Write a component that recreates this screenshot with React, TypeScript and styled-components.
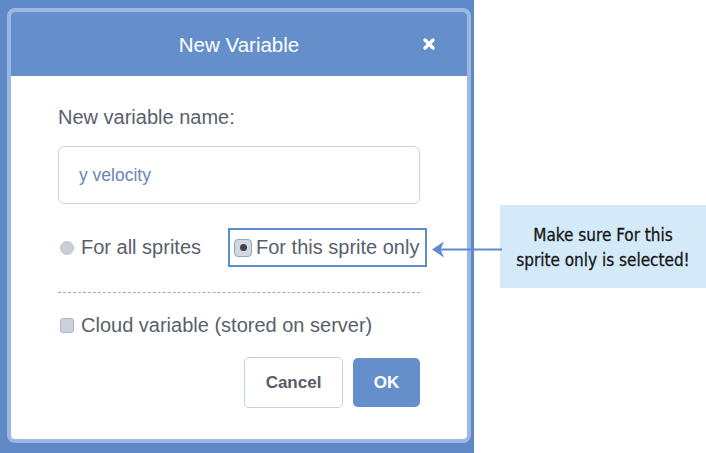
import React from 'react';
import styled, { createGlobalStyle } from 'styled-components';

const GlobalStyle = createGlobalStyle`
  html, body {
    margin: 0;
    padding: 0;
    background: #ffffff;
  }
  body {
    font-family: "Liberation Sans", Arial, sans-serif;
  }
`;

const Page = styled.div`
  position: relative;
  display: flex;
  width: 706px;
  height: 453px;
  overflow: hidden;
`;

const Backdrop = styled.div`
  box-sizing: border-box;
  flex-shrink: 0;
  width: 474px;
  height: 100%;
  padding: 8px 3px 10px 7px;
  background: #5f89c6;
`;

const Dialog = styled.div`
  box-sizing: border-box;
  display: flex;
  flex-direction: column;
  width: 100%;
  height: 100%;
  border: 4px solid #9bb8e2;
  border-radius: 8px;
  overflow: hidden;
  background: #ffffff;
`;

const Header = styled.div`
  position: relative;
  display: flex;
  align-items: center;
  justify-content: center;
  height: 64px;
  flex-shrink: 0;
  background: #658fcb;
`;

const Title = styled.h1`
  margin: 0;
  font-size: 20.5px;
  font-weight: normal;
  color: #ffffff;
  line-height: 23px;
`;

const CloseButton = styled.button`
  position: absolute;
  right: 28px;
  top: 50%;
  transform: translateY(-50%);
  display: flex;
  align-items: center;
  justify-content: center;
  width: 20px;
  height: 20px;
  padding: 0;
  border: none;
  background: transparent;
  cursor: pointer;
`;

const Body = styled.div`
  display: flex;
  flex-direction: column;
  flex: 1;
  padding: 30px 47px 0 47px;
`;

const Label = styled.div`
  font-size: 20px;
  line-height: 23px;
  color: #585f6c;
`;

const NameInput = styled.input`
  box-sizing: border-box;
  width: 100%;
  height: 58px;
  margin-top: 17px;
  padding: 0 20px;
  border: 1.5px solid #c9d3e2;
  border-radius: 6px;
  font-family: "Liberation Sans", Arial, sans-serif;
  font-size: 17.5px;
  color: #6c85b5;
  outline: none;
`;

const RadioRow = styled.div`
  display: flex;
  align-items: center;
  height: 39px;
  margin-top: 24px;
`;

const Option = styled.label<{ $highlighted?: boolean }>`
  box-sizing: border-box;
  display: flex;
  align-items: center;
  flex-shrink: 0;
  white-space: nowrap;
  height: 39px;
  font-size: 20px;
  line-height: 23px;
  color: #585f6c;
  gap: ${(p) => (p.$highlighted ? '4px' : '7px')};
  padding: ${(p) => (p.$highlighted ? '0 6px 0 4px' : '0 0 0 2px')};
  margin-left: ${(p) => (p.$highlighted ? '27px' : '0')};
  border: ${(p) => (p.$highlighted ? '2px solid #5d8bcf' : 'none')};
`;

const RadioDot = styled.span<{ $checked?: boolean }>`
  box-sizing: border-box;
  display: inline-flex;
  align-items: center;
  justify-content: center;
  flex-shrink: 0;
  width: ${(p) => (p.$checked ? '18px' : '14px')};
  height: ${(p) => (p.$checked ? '18px' : '14px')};
  border-radius: ${(p) => (p.$checked ? '4px' : '50%')};
  background: ${(p) => (p.$checked ? '#d3d7de' : '#c9cdd5')};
  border: ${(p) => (p.$checked ? '1.5px solid #8aa6d4' : '1px solid #bfc4cd')};

  &::after {
    content: '';
    display: ${(p) => (p.$checked ? 'block' : 'none')};
    width: 7px;
    height: 7px;
    border-radius: 50%;
    background: #3d4350;
  }
`;

const Divider = styled.hr`
  width: 100%;
  height: 0;
  margin: 25px 0 0 0;
  border: none;
  border-top: 1.5px dashed #8fb1dc;
`;

const CheckRow = styled.label`
  display: flex;
  align-items: center;
  gap: 7px;
  margin-top: 21px;
  padding-left: 2px;
  font-size: 20px;
  line-height: 23px;
  color: #585f6c;
  white-space: nowrap;
`;

const CheckBox = styled.span`
  box-sizing: border-box;
  width: 14px;
  height: 15px;
  border-radius: 3px;
  background: #cdd1d9;
  border: 1px solid #aab7cc;
`;

const Actions = styled.div`
  display: flex;
  justify-content: flex-end;
  align-items: center;
  gap: 10px;
  margin-top: 20px;
`;

const Button = styled.button<{ $primary?: boolean }>`
  box-sizing: border-box;
  height: ${(p) => (p.$primary ? '49px' : '51px')};
  width: ${(p) => (p.$primary ? '67px' : '99px')};
  border-radius: 5px;
  border: ${(p) => (p.$primary ? 'none' : '1.5px solid #c4cfe0')};
  background: ${(p) => (p.$primary ? '#658fcb' : '#ffffff')};
  color: ${(p) => (p.$primary ? '#ffffff' : '#555c69')};
  font-family: "Liberation Sans", Arial, sans-serif;
  font-size: 17px;
  font-weight: bold;
  cursor: pointer;
`;

const Aside = styled.div`
  flex: 1;
  padding: 205px 0 0 26px;
  background: #ffffff;
`;

const Callout = styled.div`
  box-sizing: border-box;
  display: flex;
  flex-direction: column;
  align-items: center;
  justify-content: center;
  height: 83px;
  background: #d5eaf8;
  font-family: "DejaVu Sans Condensed", "DejaVu Sans", sans-serif;
  font-size: 17px;
  line-height: 25px;
  color: #15171b;
  text-align: center;
  padding-top: 2px;
  -webkit-text-stroke: 0.3px #15171b;
`;

const Pointer = styled.svg`
  position: absolute;
  left: 430px;
  top: 240px;
`;

const CloseIcon = () => (
  <svg width="14" height="14" viewBox="0 0 14 14">
    <path d="M3 3 L11 11 M11 3 L3 11" stroke="#ffffff" strokeWidth="3.4" strokeLinecap="round" />
  </svg>
);

export default function App() {
  return (
    <>
      <GlobalStyle />
      <Page>
        <Backdrop>
          <Dialog>
            <Header>
              <Title>New Variable</Title>
              <CloseButton aria-label="Close">
                <CloseIcon />
              </CloseButton>
            </Header>
            <Body>
              <Label>New variable name:</Label>
              <NameInput defaultValue="y velocity" />
              <RadioRow>
                <Option>
                  <RadioDot />
                  For all sprites
                </Option>
                <Option $highlighted>
                  <RadioDot $checked />
                  For this sprite only
                </Option>
              </RadioRow>
              <Divider />
              <CheckRow>
                <CheckBox />
                Cloud variable (stored on server)
              </CheckRow>
              <Actions>
                <Button>Cancel</Button>
                <Button $primary>OK</Button>
              </Actions>
            </Body>
          </Dialog>
        </Backdrop>
        <Aside>
          <Callout>
            <div>Make sure For this</div>
            <div>sprite only is selected!</div>
          </Callout>
        </Aside>
        <Pointer width="72" height="19" viewBox="0 0 72 19">
          <line x1="8" y1="9.5" x2="72" y2="9.5" stroke="#5d8bcf" strokeWidth="2" />
          <path d="M2 9.5 L14 1.5 L10.5 9.5 L14 17.5 Z" fill="#5d8bcf" />
        </Pointer>
      </Page>
    </>
  );
}
